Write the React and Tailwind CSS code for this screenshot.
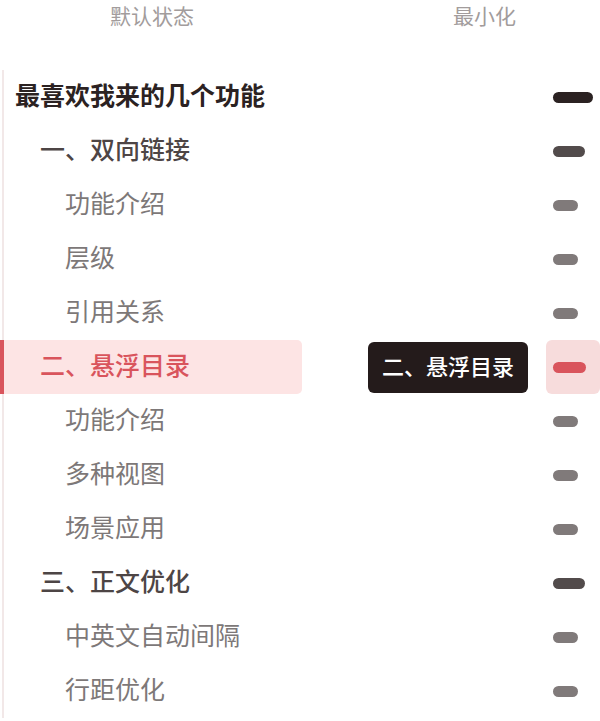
const items = [
  { text: "最喜欢我来的几个功能", level: 0 },
  { text: "一、双向链接", level: 1 },
  { text: "功能介绍", level: 2 },
  { text: "层级", level: 2 },
  { text: "引用关系", level: 2 },
  { text: "二、悬浮目录", level: 1, active: true },
  { text: "功能介绍", level: 2 },
  { text: "多种视图", level: 2 },
  { text: "场景应用", level: 2 },
  { text: "三、正文优化", level: 1 },
  { text: "中英文自动间隔", level: 2 },
  { text: "行距优化", level: 2 },
];

const textStyles = {
  0: "pl-[11px] font-bold text-[#2b2222]",
  1: "pl-[36px] font-medium text-[#4d4545]",
  2: "pl-[61px] font-normal text-[#7d7878]",
};

const barStyles = {
  0: "w-[40px] bg-[#2b2222]",
  1: "w-[32px] bg-[#524b4b]",
  2: "w-[25px] bg-[#807a7a]",
};

function Row({ item }) {
  return (
    <div className="flex h-[54px] items-center">
      {/* outline column */}
      <div
        className={`flex h-full w-[302px] items-center ${
          item.active ? "rounded-r-[5px] bg-[#fde4e4]" : ""
        }`}
      >
        {item.active ? (
          <div className="h-full w-[4px] bg-[#d9545c]" />
        ) : (
          <div className="h-full w-[4px] pl-[2px]">
            <div className="h-full w-[2px] bg-[#f2e8e8]" />
          </div>
        )}
        <span
          className={`pb-[6px] text-[25px] leading-none ${
            item.active ? "pl-[36px] font-medium text-[#d9545c]" : textStyles[item.level]
          }`}
        >
          {item.text}
        </span>
      </div>

      {/* tooltip area */}
      <div className="flex h-full flex-1 items-center justify-end pr-[18px]">
        {item.active && (
          <div className="flex h-[51px] items-center rounded-[6px] bg-[#241b1b] px-[14px] pb-[5px] text-[22px] font-medium leading-none text-white">
            {item.text}
          </div>
        )}
      </div>

      {/* minimized column */}
      <div
        className={`flex h-full w-[54px] items-center pl-[7px] ${
          item.active ? "rounded-[6px] bg-[#f7dcdc]" : ""
        }`}
      >
        <div
          className={`h-[11px] rounded-full ${
            item.active ? "w-[33px] bg-[#d9545c]" : barStyles[item.level]
          }`}
        />
      </div>
    </div>
  );
}

export default function App() {
  return (
    <div
      className="h-[721px] w-[600px] overflow-hidden bg-white"
      style={{ fontFamily: '"Noto Sans CJK SC", "Noto Sans", sans-serif' }}
    >
      <div className="flex h-[70px] items-start pt-[3px] text-[21px] leading-[24px] text-[#a29c9c]">
        <span className="ml-[110px]">默认状态</span>
        <span className="ml-[259px]">最小化</span>
      </div>
      <div>
        {items.map((item, i) => (
          <Row key={i} item={item} />
        ))}
      </div>
    </div>
  );
}
